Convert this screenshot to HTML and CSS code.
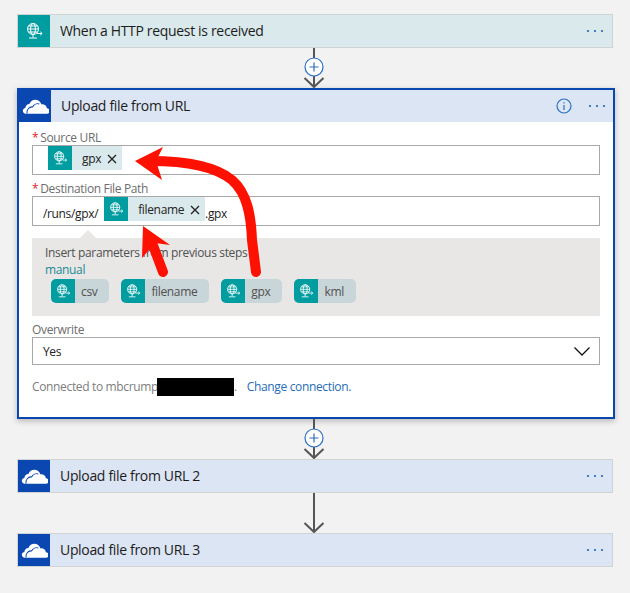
FILE: index.html
```html
<!DOCTYPE html>
<html lang="en">
<head>
<meta charset="utf-8">
<title>Flow</title>
<link rel="stylesheet" href="styles.css">
</head>
<body>
<svg class="defs" width="0" height="0" aria-hidden="true">
  <symbol id="globe" viewBox="0 0 24 24">
    <g fill="none" stroke="#fff" stroke-width="1">
      <circle cx="11" cy="10" r="5.5"/>
      <ellipse cx="11" cy="10" rx="2.4" ry="5.5"/>
      <path d="M5.5 10h11M6.400 7h9.200M6.400 13h9.200"/>
      <path d="M11 15.500v3M7 19h8"/>
      <path d="M15 14.500h5M18.300 12.800l1.800 1.700-1.800 1.700"/>
    </g>
  </symbol>
  <symbol id="cloud" viewBox="0 0 32 32">
    <path fill="#fff" d="M4.500 24.500c-2 0-3.500-1.500-3.500-3.400 0-1.800 1.300-3.200 3-3.400.1-2.600 2.100-4.600 4.700-4.700 1.300-3.200 4.100-5 7-5 3.500 0 6.200 2.200 7.400 5.500 3.100-.4 5.900 1.200 6.400 4.500 1.900.2 3.500 1.600 3.500 3.300 0 1.800-1.500 3.200-3.400 3.200z"/>
    <path fill="none" stroke="#0b47b0" stroke-width="1.200" d="M6 24.500c-1-4.500 2.500-8.500 6.500-8 1.500-3 5-4.500 8-3.500"/>
  </symbol>
  <symbol id="dots" viewBox="0 0 18 4">
    <circle cx="2" cy="2" r="1.100" fill="#1f66bb"/>
    <circle cx="9" cy="2" r="1.100" fill="#1f66bb"/>
    <circle cx="16" cy="2" r="1.100" fill="#1f66bb"/>
  </symbol>
  <symbol id="close" viewBox="0 0 10 10">
    <path d="M1 1l8 8M9 1l-8 8" stroke="#222" stroke-width="1.300" fill="none"/>
  </symbol>
</svg>

<main class="flow">
  <section class="step step-http">
    <span class="step-icon icon-teal"><svg class="glyph-lg"><use href="#globe"/></svg></span>
    <span class="step-title">When a HTTP request is received</span>
    <svg class="dots"><use href="#dots"/></svg>
  </section>

  <div class="connector">
    <svg class="conn-svg" viewBox="0 0 24 40">
      <path class="conn-line" d="M12 0v39M2.500 30l9.500 9 9.500-9"/>
      <circle class="conn-circle" cx="12" cy="19" r="9"/>
      <path class="conn-plus" d="M7.500 19h9M12 14.500v9"/>
    </svg>
  </div>

  <section class="open-card">
    <header class="open-head">
      <span class="step-icon icon-blue"><svg class="glyph-cloud"><use href="#cloud"/></svg></span>
      <span class="step-title">Upload file from URL</span>
      <svg class="info" viewBox="0 0 16 16">
        <circle cx="8" cy="8" r="7" fill="none" stroke="#2a6fc0" stroke-width="1.200"/>
        <path d="M8 7v5M8 4.200v1.300" stroke="#2a6fc0" stroke-width="1.200"/>
      </svg>
      <svg class="dots"><use href="#dots"/></svg>
    </header>
    <div class="open-body">
      <label class="field-label"><span class="req">*</span>Source URL</label>
      <div class="input input-source">
        <span class="token">
          <span class="token-icon"><svg class="glyph"><use href="#globe"/></svg></span>
          <span class="token-text">gpx</span>
          <svg class="token-x"><use href="#close"/></svg>
        </span>
      </div>
      <label class="field-label field-gap"><span class="req">*</span>Destination File Path</label>
      <div class="input input-dest">
        <span class="input-text">/runs/gpx/</span>
        <span class="token">
          <span class="token-icon"><svg class="glyph"><use href="#globe"/></svg></span>
          <span class="token-text">filename</span>
          <svg class="token-x"><use href="#close"/></svg>
        </span>
        <span class="input-text">.gpx</span>
      </div>
      <div class="params">
        <p class="params-title">Insert parameters from previous steps</p>
        <p class="params-source">manual</p>
        <div class="chips">
          <span class="chip"><span class="chip-icon"><svg class="glyph"><use href="#globe"/></svg></span><span class="chip-text">csv</span></span>
          <span class="chip"><span class="chip-icon"><svg class="glyph"><use href="#globe"/></svg></span><span class="chip-text">filename</span></span>
          <span class="chip"><span class="chip-icon"><svg class="glyph"><use href="#globe"/></svg></span><span class="chip-text">gpx</span></span>
          <span class="chip"><span class="chip-icon"><svg class="glyph"><use href="#globe"/></svg></span><span class="chip-text">kml</span></span>
        </div>
      </div>
      <label class="field-label field-gap">Overwrite</label>
      <div class="select">
        <span>Yes</span>
        <svg class="select-chevron" viewBox="0 0 16 9"><path d="M.5.500l7.500 7.500 7.500-7.500" fill="none" stroke="#111" stroke-width="1.300"/></svg>
      </div>
      <p class="conn-note">Connected to mbcrump<span class="redact"></span>.<a class="change" href="#">Change connection.</a></p>
    </div>
  </section>

  <div class="connector">
    <svg class="conn-svg" viewBox="0 0 24 40">
      <path class="conn-line" d="M12 0v39M2.500 30l9.500 9 9.500-9"/>
      <circle class="conn-circle" cx="12" cy="19" r="9"/>
      <path class="conn-plus" d="M7.500 19h9M12 14.500v9"/>
    </svg>
  </div>

  <section class="step step-upload">
    <span class="step-icon icon-blue"><svg class="glyph-cloud"><use href="#cloud"/></svg></span>
    <span class="step-title">Upload file from URL 2</span>
    <svg class="dots"><use href="#dots"/></svg>
  </section>

  <div class="connector">
    <svg class="conn-svg" viewBox="0 0 24 40">
      <path class="conn-line" d="M12 0v39M2.500 30l9.500 9 9.500-9"/>
    </svg>
  </div>

  <section class="step step-upload">
    <span class="step-icon icon-blue"><svg class="glyph-cloud"><use href="#cloud"/></svg></span>
    <span class="step-title">Upload file from URL 3</span>
    <svg class="dots"><use href="#dots"/></svg>
  </section>
</main>

<svg class="annot" viewBox="0 0 630 593" aria-hidden="true">
  <path class="annot-line" d="M150 161C185 161 215 166 232 180C247 193 251 215 252 240L256 272"/>
  <path class="annot-head" d="M135 161L163 147L156 161L162 180Z"/>
  <path class="annot-line" d="M163 272L151 240"/>
  <path class="annot-head" d="M143 226L170 245L155 243L142 258Z"/>
</svg>
</body>
</html>
```

FILE: styles.css
```css
* { box-sizing: border-box; }
html, body { margin: 0; padding: 0; }
body {
  width: 630px;
  height: 593px;
  overflow: hidden;
  background: #f2f2f2;
  font-family: "Open Sans", "Noto Sans", "Liberation Sans", sans-serif;
  font-size: 12px;
  letter-spacing: -.35px;
  color: #222;
  position: relative;
}
.defs { position: absolute; }
.flow { padding: 14px 0 0 17px; }

.step {
  width: 596px;
  height: 34px;
  display: flex;
  align-items: center;
  border: 1px solid #cfd3d4;
}
.step-http { background: #dae9ec; }
.step-upload { background: #dce5f4; }
.step-icon {
  width: 32px;
  height: 32px;
  flex: none;
  display: flex;
  align-items: center;
  justify-content: center;
}
.icon-teal { background: #009da0; }
.icon-blue { background: #0b47b0; }
.glyph-lg { width: 24px; height: 24px; }
.glyph { width: 20px; height: 20px; }
.glyph-cloud { width: 27px; height: 27px; }
.step-title {
  margin-left: 10px;
  font-size: 14px;
  letter-spacing: -.33px;
  line-height: 32px;
  color: #1c1c1c;
  flex: 1;
}
.dots { width: 18px; height: 4px; margin-right: 8px; flex: none; }

.connector {
  width: 594px;
  height: 40px;
  display: flex;
  justify-content: center;
}
.conn-svg { width: 24px; height: 40px; }
.conn-line { fill: none; stroke: #555; stroke-width: 2; }
.conn-circle { fill: #fff; stroke: #2a6fc0; stroke-width: 1.200; }
.conn-plus { fill: none; stroke: #2a6fc0; stroke-width: 1.200; }

.open-card {
  width: 598px;
  height: 331px;
  border: 2px solid #0b47b0;
  background: #fff;
  box-shadow: 0 2px 6px rgba(0, 0, 0, .25);
}
.open-head {
  height: 32px;
  display: flex;
  align-items: center;
  background: #dce5f4;
}
.info { width: 16px; height: 16px; margin-right: 16px; flex: none; }
.open-head .dots { margin-right: 7px; }
.open-body { padding: 8px 13px 0; }

.field-label {
  display: block;
  height: 15px;
  line-height: 15px;
  font-size: 12px;
  color: #6d6d6d;
}
.field-gap { margin-top: 6px; }
.req { color: #e0202a; margin-right: 2px; }

.input {
  height: 30px;
  border: 1px solid #a8a8a8;
  background: #fff;
  display: flex;
  align-items: flex-start;
}
.input-source { padding-left: 15px; }
.input-dest { padding-left: 10px; }
.input-text {
  font-size: 12px;
  line-height: 20px;
  margin-top: 7px;
  color: #222;
}
.input-text:first-child { margin-right: 6px; }

.token {
  height: 24px;
  display: flex;
  align-items: center;
  background: #dae9ec;
  font-size: 12px;
  padding-right: 5px;
}
.token-icon {
  width: 24px;
  height: 24px;
  display: flex;
  align-items: center;
  justify-content: center;
  background: #009da0;
}
.token-text { margin: 0 6px 0 10px; color: #222; }
.token-x { width: 10px; height: 10px; margin: 1px 0 0 0; }

.params {
  position: relative;
  height: 78px;
  margin-top: 12px;
  padding: 7px 13px 0;
  background: #e8e7e6;
  font-size: 12px;
}
.params::before {
  content: "";
  position: absolute;
  left: 48px;
  top: -8px;
  border-left: 8px solid transparent;
  border-right: 8px solid transparent;
  border-bottom: 8px solid #e8e7e6;
}
.params-title { margin: 0; line-height: 16px; color: #505050; }
.params-source { margin: 1px 0 0; line-height: 16px; color: #1b8a94; }
.chips { display: flex; gap: 12px; margin: 1px 0 0 6px; }
.chip {
  height: 24px;
  display: flex;
  align-items: center;
  background: #c9d6d9;
  border-radius: 5px;
  overflow: hidden;
}
.chip-icon {
  width: 24px;
  height: 24px;
  display: flex;
  align-items: center;
  justify-content: center;
  background: #009da0;
}
.chip-text { padding: 0 12px 0 6px; color: #505050; }

.select {
  height: 28px;
  border: 1px solid #a8a8a8;
  display: flex;
  align-items: center;
  justify-content: space-between;
  padding: 0 9px 0 10px;
  font-size: 12px;
}
.select-chevron { width: 16px; height: 9px; }

.conn-note {
  margin: 12px 0 0;
  line-height: 20px;
  font-size: 12px;
  color: #7d7d7d;
  display: flex;
  align-items: center;
}
.redact {
  width: 77px;
  height: 18px;
  margin-left: -1px;
  background: #000;
}
.change { margin-left: 10px; color: #1f6cb8; text-decoration: none; }

.annot {
  position: absolute;
  left: 0;
  top: 0;
  width: 630px;
  height: 593px;
  pointer-events: none;
}
.annot-line { fill: none; stroke: #fe1100; stroke-width: 10; stroke-linecap: round; }
.annot-head { fill: #fe1100; }
```
